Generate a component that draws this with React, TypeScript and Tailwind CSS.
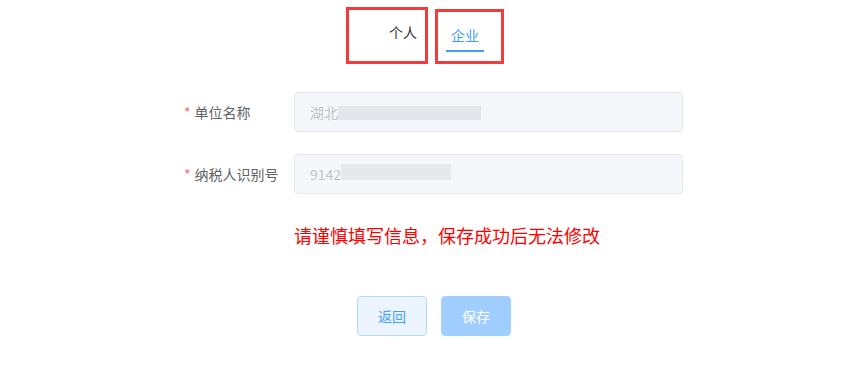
export default function App() {
  return (
    <div
      className="w-[867px] h-[368px] bg-white overflow-hidden"
      style={{ fontFamily: '"Noto Sans CJK SC", "Noto Sans", sans-serif' }}
    >
      {/* 切换标签 */}
      <div className="flex items-start gap-[7px] pt-[7px] pl-[346px]">
        <div className="w-[82px] h-[57px] border-[3px] border-[#f23b3b] flex justify-end pt-[12px] pr-[8px]">
          <span className="text-[14px] leading-[20px] text-[#303133]">个人</span>
        </div>
        <div className="mt-[2px] w-[69px] h-[55px] border-[3px] border-[#f23b3b] pt-[10px] pl-[8px]">
          <span className="inline-block w-[38px] text-center text-[14px] leading-[20px] text-[#409eff] pb-[5px] border-b-2 border-[#409eff]">
            企业
          </span>
        </div>
      </div>

      {/* 表单 */}
      <div className="mt-[28px] pl-[184px]">
        <div className="flex items-center">
          <label className="w-[110px] text-[14px] text-[#606266]">
            <span className="text-[#f56c6c] mr-[4px]">*</span>单位名称
          </label>
          <div className="w-[389px] h-[40px] bg-[#f5f7fa] border border-[#e4e7ed] rounded-[4px] pl-[15px] flex items-center text-[14px] text-[#c0c4cc]">
            <span>湖北</span>
            <span className="inline-block w-[143px] h-[14px] mt-[2px] bg-[#e4e6eb]" />
          </div>
        </div>
        <div className="flex items-center mt-[22px]">
          <label className="w-[110px] text-[14px] text-[#606266]">
            <span className="text-[#f56c6c] mr-[4px]">*</span>纳税人识别号
          </label>
          <div className="w-[389px] h-[40px] bg-[#f5f7fa] border border-[#e4e7ed] rounded-[4px] pl-[15px] flex items-center text-[14px] text-[#c0c4cc]">
            <span>9142</span>
            <span className="inline-block w-[110px] h-[16px] mt-[-4px] bg-[#e6e8ec]" />
          </div>
        </div>
      </div>

      <p className="mt-[29px] pl-[294px] text-[18px] leading-[24px] text-[#ff0000]">
        请谨慎填写信息，保存成功后无法修改
      </p>

      <div className="mt-[49px] pl-[357px] flex gap-[14px]">
        <button className="w-[70px] h-[40px] rounded-[4px] border border-[#b3d8ff] bg-[#ecf5ff] text-[14px] text-[#409eff]">
          返回
        </button>
        <button className="w-[70px] h-[40px] rounded-[4px] border border-[#a0cfff] bg-[#a0cfff] text-[14px] text-white">
          保存
        </button>
      </div>
    </div>
  )
}
